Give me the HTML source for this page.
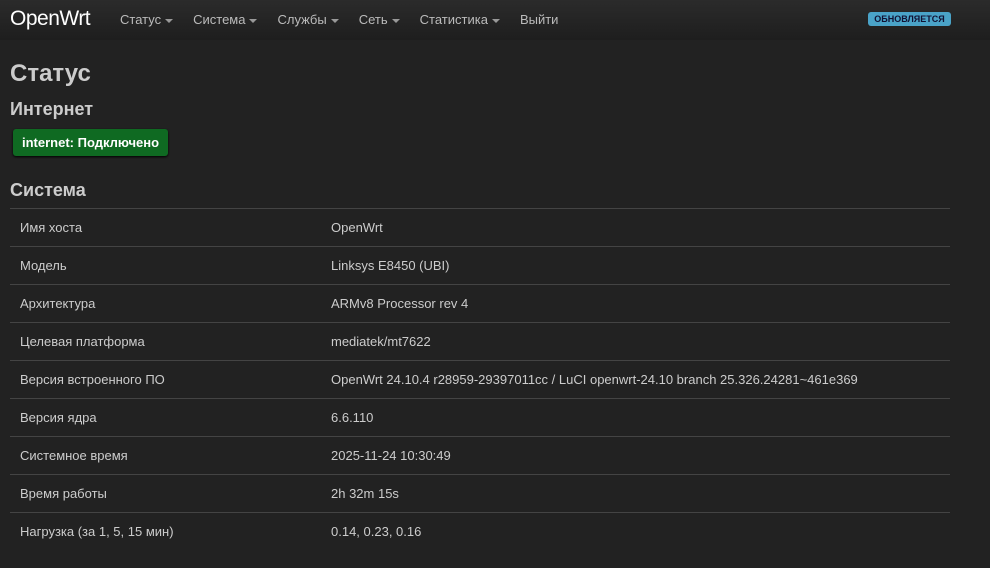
<!DOCTYPE html>
<html><head><meta charset="utf-8"><style>
*{margin:0;padding:0;box-sizing:border-box}
body{width:990px;height:568px;overflow:hidden;background:#222;font-family:"Liberation Sans",Arial,sans-serif;color:#ccc}
.hdr{height:40px;background:linear-gradient(#2b2b2b,#1e1e1e);position:relative}
.brand{position:absolute;left:10px;top:7px;font-size:21px;color:#fff;letter-spacing:-0.5px}
.nav{position:absolute;left:120px;top:12px;font-size:13px;color:#bbb}
.nav span{margin-right:20px}
.car{display:inline-block;width:0;height:0;border-left:4px solid transparent;border-right:4px solid transparent;border-top:4px solid #999;vertical-align:middle;margin-left:4px}
.upd{position:absolute;left:868px;top:12px;width:83px;text-align:center;background:#4aa3c8;color:#113;font-size:9px;font-weight:bold;padding:2px 0;border-radius:3px}
h1{position:absolute;left:10px;top:60px;font-size:24px;font-weight:bold;color:#ccc}
h2{position:absolute;left:10px;font-size:18px;font-weight:bold;color:#ccc}
.badge{position:absolute;left:13px;top:129px;width:155px;height:27px;background:#0f6a22;border-radius:3px;color:#fff;font-size:13px;font-weight:bold;padding:6px 0 0 9px;box-shadow:0 1px 2px #000}
table{position:absolute;left:10px;top:208px;width:940px;border-collapse:collapse;font-size:13px;color:#ccc}
td{height:38px;border-top:1px solid #444;padding-left:10px}
td.v{padding-left:11px}
</style></head><body>
<div class="hdr"><div class="brand">OpenWrt</div>
<div class="nav"><span>Статус<i class="car"></i></span><span>Система<i class="car"></i></span><span>Службы<i class="car"></i></span><span>Сеть<i class="car"></i></span><span>Статистика<i class="car"></i></span><span>Выйти</span></div>
<div class="upd">ОБНОВЛЯЕТСЯ</div></div>
<h1>Статус</h1>
<h2 style="top:99px">Интернет</h2>
<div class="badge">internet: Подключено</div>
<h2 style="top:180px">Система</h2>
<table>
<tr><td style="width:310px">Имя хоста</td><td class="v">OpenWrt</td></tr>
<tr><td>Модель</td><td class="v">Linksys E8450 (UBI)</td></tr>
<tr><td>Архитектура</td><td class="v">ARMv8 Processor rev 4</td></tr>
<tr><td>Целевая платформа</td><td class="v">mediatek/mt7622</td></tr>
<tr><td>Версия встроенного ПО</td><td class="v">OpenWrt 24.10.4 r28959-29397011cc / LuCI openwrt-24.10 branch 25.326.24281~461e369</td></tr>
<tr><td>Версия ядра</td><td class="v">6.6.110</td></tr>
<tr><td>Системное время</td><td class="v">2025-11-24 10:30:49</td></tr>
<tr><td>Время работы</td><td class="v">2h 32m 15s</td></tr>
<tr><td>Нагрузка (за 1, 5, 15 мин)</td><td class="v">0.14, 0.23, 0.16</td></tr>
</table>
</body></html>
